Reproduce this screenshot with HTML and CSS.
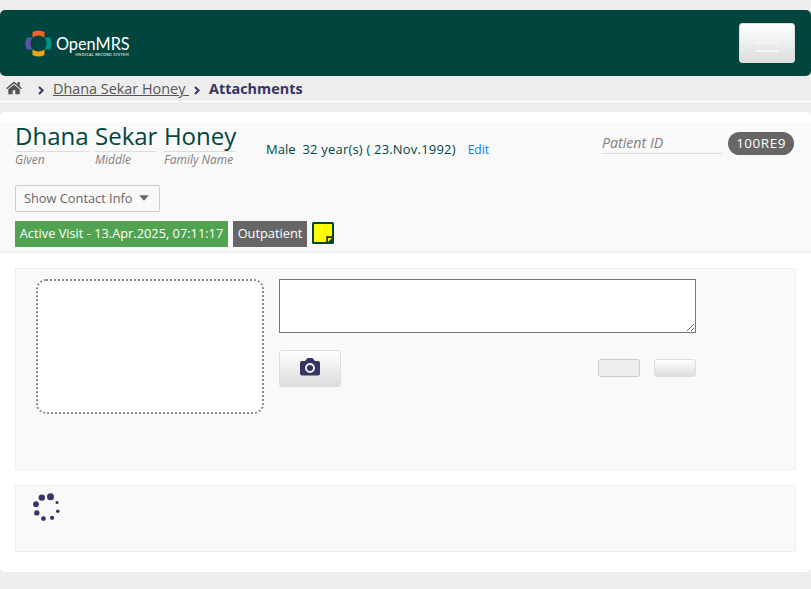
FILE: index.html
```html
<!DOCTYPE html>
<html lang="en">
<head>
<meta charset="utf-8">
<title>Attachments</title>
<link rel="stylesheet" href="styles.css">
</head>
<body>
<header class="topbar">
  <a class="logo">
    <svg class="logo-mark" width="27" height="27" viewBox="0 0 27 27">
      <path fill="#f26522" d="M7.500 7.500V2Q13.500-1.200 19.500 2V7.500Q13.500 3.500 7.500 7.500Z"/>
      <path fill="#009384" d="M19.500 7.500H25Q28.200 13.500 25 19.500H19.500Q23.500 13.500 19.500 7.500Z"/>
      <path fill="#eea616" d="M7.500 19.500V25Q13.500 28.200 19.500 25V19.500Q13.500 23.500 7.500 19.500Z"/>
      <path fill="#5b57a6" d="M7.500 7.500H2Q-1.200 13.500 2 19.500H7.500Q3.500 13.500 7.500 7.500Z"/>
    </svg>
    <span class="wordmark"><span class="brand">OpenMRS</span><span class="tagline">MEDICAL RECORD SYSTEM</span></span>
  </a>
  <button class="menu" aria-label="Menu"><i></i><i></i><i></i></button>
</header>
<nav class="crumbs">
  <svg class="home" width="16" height="14" viewBox="0 0 16 14"><path fill="#555" d="M8 .500 0 7.200l1 1.100L8 2.600l7 5.700L16 7.200l-2.200-1.900V1h-2.300v2.400ZM8 3.700 2.300 8.300V13.300H6.700V9.300h2.600v4h4.400V8.300Z"/></svg>
  <svg class="chev first" width="6" height="9" viewBox="0 0 6 9"><path d="M1 1 4.600 4.500 1 8"/></svg>
  <a class="crumb">Dhana Sekar Honey </a>
  <svg class="chev" width="6" height="9" viewBox="0 0 6 9"><path d="M1 1 4.600 4.500 1 8"/></svg>
  <b class="current">Attachments</b>
</nav>
<main class="page">
  <section class="patient">
    <div class="identity">
      <div class="names">
        <div class="name"><span>Dhana</span><em>Given</em></div>
        <div class="name"><span>Sekar</span><em>Middle</em></div>
        <div class="name"><span>Honey</span><em>Family Name</em></div>
      </div>
      <div class="facts"><span>Male</span><span class="age">32 year(s) ( 23.Nov.1992)</span><a>Edit</a></div>
      <div class="pid"><em>Patient ID</em><span class="badge">100RE9</span></div>
    </div>
    <button class="contact">Show Contact Info<svg width="10" height="6" viewBox="0 0 10 6"><path fill="#666" d="M.3.300H9.700L5 5.700Z"/></svg></button>
    <div class="tags">
      <span class="tag visit">Active Visit - 13.Apr.2025, 07:11:17</span>
      <span class="tag kind">Outpatient</span>
      <svg class="note" width="22" height="22" viewBox="0 0 22 22"><rect width="22" height="22" rx="1.500" fill="#00463f"/><path fill="#ff0" d="M2 2H20V14H14V20H2Z"/><path fill="#ff0" d="M16 16H20L16 20Z"/><path stroke="#6b5a20" fill="none" d="M20 14.500H14.500V20"/></svg>
    </div>
  </section>
  <section class="panel upload">
    <div class="drop"></div>
    <div class="form">
      <textarea class="caption"></textarea>
      <div class="actions">
        <button class="btn camera" aria-label="Camera"><svg width="20" height="18" viewBox="0 0 20 18"><path fill="#363463" d="M2 3H5L7 .500Q7.400 0 8 0H12Q12.600 0 13 .500L15 3H18Q20 3 20 5V15.500Q20 17.500 18 17.500H2Q0 17.500 0 15.500V5Q0 3 2 3Z"/><circle cx="10" cy="10" r="4" fill="none" stroke="#eee" stroke-width="2"/></svg></button>
        <button class="btn small off" aria-label="Clear" disabled></button>
        <button class="btn small" aria-label="Upload"></button>
      </div>
    </div>
  </section>
  <section class="panel gallery">
    <svg width="30" height="30" viewBox="0 0 30 30" fill="#363463"><circle cx="18.500" cy="4.800" r="3.500"/><circle cx="9.800" cy="5.600" r="3.200"/><circle cx="4" cy="12.200" r="2.900"/><circle cx="4.800" cy="20.900" r="2.700"/><circle cx="11.400" cy="26.600" r="2.400"/><circle cx="20.100" cy="25.800" r="2.100"/><circle cx="25.800" cy="19.200" r="1.800"/><circle cx="25" cy="10.500" r="1.500"/></svg>
  </section>
</main>
</body>
</html>
```
FILE: styles.css
```css
* { box-sizing: border-box; }
body {
  margin: 0;
  padding-top: 10px;
  background: #ededed;
  color: #00463f;
  font-family: "Open Sans", sans-serif;
}
button { margin: 0; padding: 0; font-family: inherit; }
svg { display: block; flex: none; }

.topbar {
  display: flex;
  justify-content: space-between;
  height: 66px;
  padding: 13px 16px 0 25px;
  border-radius: 5px;
  background: #00463f;
}
.logo { display: flex; padding-top: 7px; }
.wordmark { display: flex; flex-direction: column; width: 73px; margin-left: 4px; color: #fff; }
.brand { height: 22px; font: 16.300px/28px Lato, sans-serif; }
.tagline { font: 3.800px/5px Lato, sans-serif; letter-spacing: .25px; text-align: right; white-space: nowrap; }
.menu {
  display: flex;
  flex-direction: column;
  align-items: center;
  justify-content: flex-start;
  gap: 6px;
  width: 56px;
  height: 40px;
  padding-top: 10px;
  border: 1px solid #ddd;
  border-radius: 3px;
  background: linear-gradient(#fff, #ddd);
}
.menu i { flex: none; width: 24px; height: 2px; border-radius: 1px; background: #f6f6f6; }

.crumbs {
  display: flex;
  height: 26px;
  border-bottom: 1px solid #fff;
  font-size: 14.400px;
  line-height: 26px;
}
.home { margin: 5px 0 0 6px; }
.chev { margin: 10px 0 0 5px; fill: none; stroke: #363463; stroke-width: 2; }
.chev.first { margin-left: 16px; }
.crumb { margin-left: 9px; color: #555; text-decoration: underline; white-space: pre; }
.current { margin-left: 9px; color: #363463; }

.page { height: 460px; margin-top: 10px; padding-top: 10px; border-radius: 5px; background: #fff; }
.patient { height: 131px; padding-left: 15px; border-bottom: 2px solid #eee; background: #f9f9f9; }
.identity { display: flex; height: 63px; }
.names { display: flex; gap: 6.500px; width: 251px; }
.name span { display: block; height: 30px; border-bottom: 1px solid #ddd; font-size: 24px; line-height: 27px; }
em { color: #808080; font-style: italic; }
.name em { display: block; font-size: 12px; line-height: 16px; }
.facts { display: flex; width: 336px; padding-top: 17px; font-size: 13px; line-height: 20px; }
.age { margin-left: 7px; letter-spacing: .19px; white-space: nowrap; }
.facts a { margin-left: 12px; color: #007fff; font-size: 12px; line-height: 21px; }
.pid { display: flex; padding-top: 10px; }
.pid em { width: 120px; height: 22px; border-bottom: 1px solid #ddd; font-size: 14.200px; line-height: 21px; }
.badge {
  width: 66px;
  height: 23px;
  margin-left: 6px;
  border-radius: 12px;
  background: #666;
  color: #fff;
  font-size: 13.500px;
  line-height: 23px;
  letter-spacing: .5px;
  text-align: center;
}
.contact {
  display: flex;
  width: 145px;
  height: 27px;
  padding-left: 8px;
  border: 1px solid #ccc;
  border-radius: 2px;
  background: #f9f9f9;
  color: #666;
  font-size: 12.800px;
  line-height: 25px;
}
.contact svg { margin: 9px 0 0 6px; }
.tags { display: flex; gap: 5px; margin-top: 9px; }
.tag { height: 26px; color: #fff; font-size: 12.800px; line-height: 25px; text-align: center; white-space: nowrap; }
.visit { width: 213px; background: #51a351; }
.kind { width: 74px; background: #666; }
.note { margin-top: 1px; }

.panel { margin: 15px 15px 0; border: 1px solid #eee; background: #f9f9f9; }
.upload { display: flex; height: 202px; padding: 10px 0 0 20px; }
.drop { width: 228px; height: 135px; border: 2px dotted #888; border-radius: 10px; background: #fff; }
.form { width: 417px; margin-left: 15px; }
.caption { display: block; width: 417px; height: 54px; margin: 0; border: 1px solid #767676; border-radius: 0; background: #fff; }
.actions { display: flex; align-items: flex-start; gap: 14px; margin-top: 17px; }
.btn { border: 1px solid #ddd; border-radius: 3px; background: linear-gradient(#fff, #ddd); }
.camera { width: 62px; height: 37px; margin-right: auto; padding: 0 0 3px 20px; }
.small { width: 42px; height: 18px; margin-top: 9px; }
.off { border-color: #ccc; background: #eee; }
.gallery { height: 67px; padding: 6px 0 0 16px; }
```
